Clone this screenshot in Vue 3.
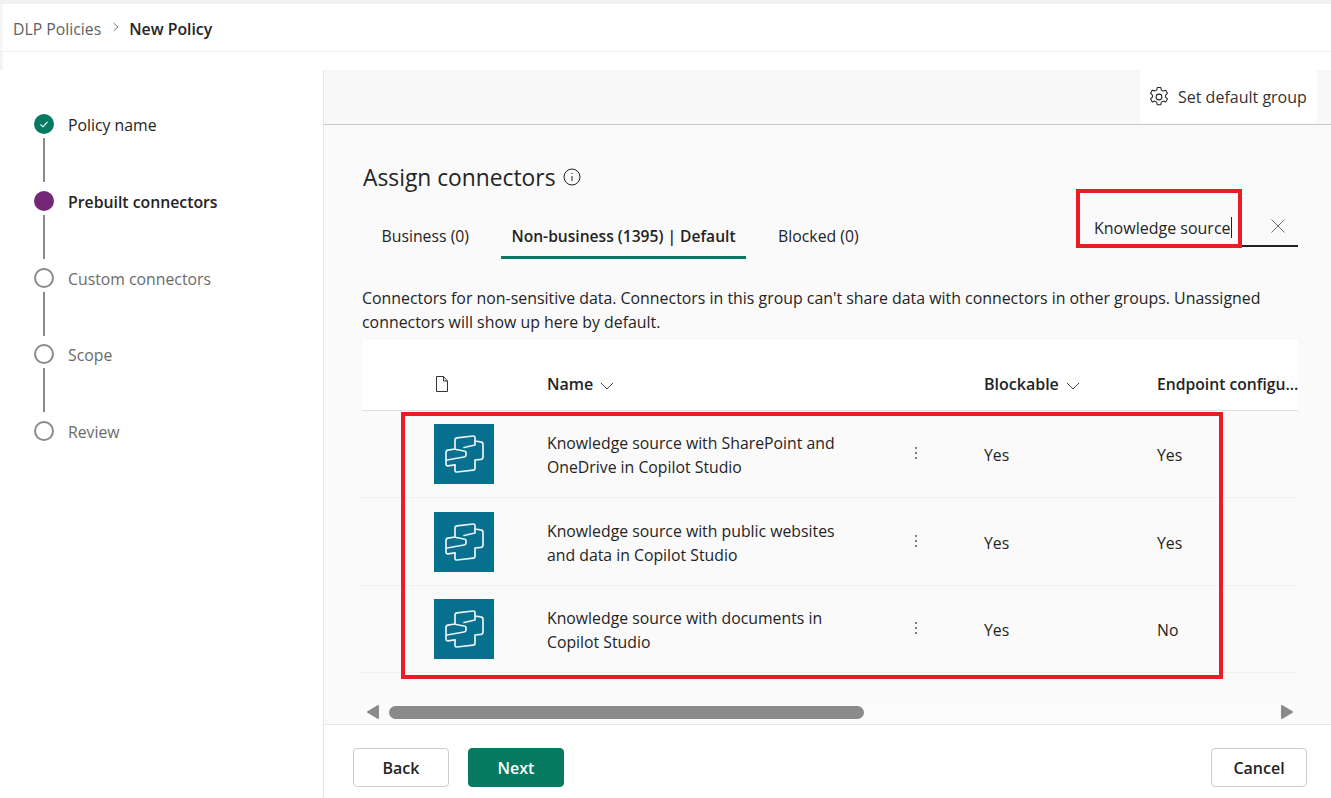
<script setup>
const steps = [
  { label: 'Policy name', state: 'done' },
  { label: 'Prebuilt connectors', state: 'current' },
  { label: 'Custom connectors', state: 'todo' },
  { label: 'Scope', state: 'todo' },
  { label: 'Review', state: 'todo' },
]

const rows = [
  { name: 'Knowledge source with SharePoint and OneDrive in Copilot Studio', blockable: 'Yes', endpoint: 'Yes' },
  { name: 'Knowledge source with public websites and data in Copilot Studio', blockable: 'Yes', endpoint: 'Yes' },
  { name: 'Knowledge source with documents in Copilot Studio', blockable: 'Yes', endpoint: 'No' },
]
</script>

<template>
  <div class="page">
    <div class="top-strip"></div>
    <div class="crumbs">
      <span class="crumb">DLP Policies</span>
      <svg class="crumb-sep" width="10" height="10" viewBox="0 0 10 10"><path d="M2.5 1l4.5 4-4.5 4" fill="none" stroke="#777" stroke-width="1" /></svg>
      <span class="crumb-now">New Policy</span>
    </div>
    <div class="band"></div>

    <div class="body">
      <aside class="side">
        <div v-for="(step, i) in steps" :key="step.label" class="step" :class="step.state">
          <div class="rail">
            <span class="dot">
              <svg v-if="step.state === 'done'" width="12" height="12" viewBox="0 0 12 12"><path d="M2.5 6.5l2.5 2.3 4.5-5" fill="none" stroke="#fff" stroke-width="1.1" /></svg>
            </span>
            <span v-if="i < steps.length - 1" class="line"></span>
          </div>
          <span class="step-label">{{ step.label }}</span>
        </div>
      </aside>

      <main class="main">
        <div class="toolbar">
          <button class="default-btn">
            <svg width="20" height="20" viewBox="1 1 18 18" fill="none" stroke="#242424" stroke-width=".95">
              <circle cx="10" cy="10" r="2.6" />
              <path d="M8.4 1.500h3.200l.5 2.300 1.700.9 2.200-.8 1.600 2.800-1.700 1.600v1.800l1.700 1.600-1.600 2.800-2.200-.8-1.700.9-.5 2.300H8.400l-.5-2.300-1.700-.9-2.200.8-1.600-2.800 1.700-1.600V8.300L2.400 6.700 4 3.900l2.200.8 1.700-.9z" stroke-linejoin="round" />
            </svg>
            <span>Set default group</span>
          </button>
        </div>

        <div class="content">
          <div class="title-row">
            <h1>Assign connectors</h1>
            <svg width="18" height="18" viewBox="0 0 18 18" fill="none" stroke="#242424">
              <circle cx="9" cy="9" r="8" />
              <path d="M9 8v5" />
              <circle cx="9" cy="5.4" r=".6" fill="#242424" stroke="none" />
            </svg>
          </div>

          <div class="tab-row">
            <div class="tabs">
              <span class="tab">Business (0)</span>
              <span class="tab active">Non-business (1395) | Default</span>
              <span class="tab">Blocked (0)</span>
            </div>
            <div class="search">
              <span class="search-text">Knowledge source</span>
              <span class="caret"></span>
              <svg class="search-x" width="16" height="16" viewBox="0 0 16 16"><path d="M1.5 1.5l13 13M14.500 1.500l-13 13" stroke="#6f6f6f" stroke-width="1" /></svg>
            </div>
            <div class="mark mark-search"></div>
          </div>

          <p class="hint">Connectors for non-sensitive data. Connectors in this group can't share data with connectors in other groups. Unassigned connectors will show up here by default.</p>

          <div class="table">
            <div class="grid head">
              <span></span>
              <svg width="16" height="18" viewBox="0 0 16 18" fill="none" stroke="#333"><path d="M2.500 1.500h7l4 4.500v10.500h-11zM9.500 1.500v4.500h4" /></svg>
              <span class="col-head">Name <svg width="14" height="8" viewBox="0 0 14 8"><path d="M1 1l6 6 6-6" fill="none" stroke="#444" /></svg></span>
              <span></span>
              <span class="col-head">Blockable <svg width="14" height="8" viewBox="0 0 14 8"><path d="M1 1l6 6 6-6" fill="none" stroke="#444" /></svg></span>
              <span class="col-head clip">Endpoint configu...</span>
            </div>

            <div v-for="row in rows" :key="row.name" class="grid row">
              <span></span>
              <div class="logo">
                <svg width="60" height="60" viewBox="0 0 60 60" fill="none" stroke="#e9f3f6" stroke-width="1.700" stroke-linejoin="round" stroke-linecap="round">
                  <path d="M21 25V16q0-2 2-2.200l16-1.800q2-.2 2 2V17l5.500.8q2.500.3 2.500 2.500V33q0 2-2 2.300l-6 .7v8q0 2-2 2.200l-16 1.800q-2 .2-2-2V41" />
                  <path d="M41 17v4l-11 2.500" />
                  <path d="M21 25l-7 1.200q-2 .3-2 2.500V40q0 2 2 1.800l7-1" />
                  <path d="M13 36l17-3q2-.3 2-2v-2q0-2-2-2l-8-1.500" />
                </svg>
              </div>
              <span class="row-name">{{ row.name }}</span>
              <svg class="more" width="4" height="14" viewBox="0 0 4 14" fill="#555"><circle cx="2" cy="2" r="1" /><circle cx="2" cy="7" r="1" /><circle cx="2" cy="12" r="1" /></svg>
              <span class="cell">{{ row.blockable }}</span>
              <span class="cell">{{ row.endpoint }}</span>
            </div>
            <div class="mark mark-table"></div>
          </div>

          <div class="scroller">
            <svg width="12" height="14" viewBox="0 0 12 14"><path d="M11 1v12L1 7z" fill="#8a8a8a" stroke="#8a8a8a" stroke-width="2" stroke-linejoin="round" /></svg>
            <div class="track"><div class="thumb"></div></div>
            <svg width="12" height="14" viewBox="0 0 12 14"><path d="M1 1v12l10-6z" fill="#8a8a8a" stroke="#8a8a8a" stroke-width="2" stroke-linejoin="round" /></svg>
          </div>
        </div>

        <footer class="foot">
          <button class="btn">Back</button>
          <button class="btn primary">Next</button>
          <button class="btn cancel">Cancel</button>
        </footer>
      </main>
    </div>
  </div>
</template>

<style scoped>
.page {
  width: 1331px;
  height: 798px;
  display: flex;
  flex-direction: column;
  overflow: hidden;
  background: #fff;
  color: #242424;
  font-family: "Open Sans", "Noto Sans", sans-serif;
  font-size: 15.800px;
}
.top-strip {
  height: 4px;
  background: #f0f0f0;
  flex: none;
}
.crumbs {
  height: 48px;
  flex: none;
  box-sizing: border-box;
  padding: 2px 0 0 13px;
  display: flex;
  align-items: center;
  border-bottom: 1px solid #f2f2f2;
  background: linear-gradient(90deg, #f2f2f2 0, #fff 4px);
}
.crumb {
  color: #616161;
}
.crumb-sep {
  margin: 0 8px 3px 10px;
}
.crumb-now {
  font-weight: 600;
}
.band {
  height: 18px;
  flex: none;
  background: linear-gradient(90deg, #eee 0, #fff 4px);
}
.body {
  flex: 1;
  display: flex;
  min-height: 0;
}
.side {
  width: 324px;
  flex: none;
  box-sizing: border-box;
  padding: 44px 0 0 34px;
  border-right: 1px solid #e6e6e6;
}
.step {
  display: flex;
  height: 76.750px;
  gap: 14px;
}
.rail {
  width: 20px;
  display: flex;
  flex-direction: column;
  align-items: center;
  gap: 4px;
}
.dot {
  width: 20px;
  height: 20px;
  border-radius: 50%;
  box-sizing: border-box;
  flex: none;
  display: flex;
  align-items: center;
  justify-content: center;
}
.done .dot {
  background: #057a60;
}
.current .dot {
  background: #742774;
}
.todo .dot {
  border: 2px solid #8a8a8a;
}
.line {
  width: 2px;
  height: 44px;
  background: #8a8a8a;
}
.step-label {
  line-height: 22px;
}
.current .step-label {
  font-weight: 600;
}
.todo .step-label {
  color: #6b6b6b;
}
.main {
  flex: 1;
  min-width: 0;
  display: flex;
  flex-direction: column;
}
.toolbar {
  height: 55px;
  flex: none;
  box-sizing: border-box;
  background: #f8f8f8;
  border-bottom: 1px solid #c8c8c8;
  display: flex;
  justify-content: flex-end;
  padding-right: 14px;
}
.default-btn {
  height: 53px;
  width: 177px;
  border: 0;
  border-radius: 4px;
  background: #fff;
  font: inherit;
  font-size: 16px;
  color: #333;
  display: flex;
  align-items: center;
  gap: 9px;
  padding: 0 0 0 9px;
}
.content {
  flex: 1;
  min-height: 0;
  box-sizing: border-box;
  background: #fafafa;
  padding: 34px 33px 0 38px;
  display: flex;
  flex-direction: column;
}
.title-row {
  display: flex;
  align-items: center;
  gap: 7px;
  height: 36px;
  padding-left: 1px;
}
h1 {
  margin: 0;
  font-size: 22.800px;
  font-weight: 400;
}
.tab-row {
  position: relative;
  display: flex;
  justify-content: space-between;
  align-items: flex-start;
  height: 48px;
  margin-top: 18px;
}
.tabs {
  display: flex;
  gap: 21.500px;
  padding-left: 9px;
}
.tab {
  height: 46px;
  padding: 0 10.500px;
  box-sizing: border-box;
  line-height: 46px;
}
.tab.active {
  font-size: 15.600px;
  font-weight: 600;
  border-bottom: 3px solid #057a60;
}
.search {
  position: relative;
  width: 221px;
  height: 35px;
  box-sizing: border-box;
  border-bottom: 2px solid #222;
  padding-left: 17px;
  line-height: 32px;
  margin-top: -1px;
  display: flex;
  font-size: 16px;
}
.caret {
  width: 1px;
  height: 21px;
  background: #222;
  margin-top: 5px;
}
.search-x {
  margin: 6px 0 0 auto;
  position: relative;
  right: 12px;
}
.mark {
  position: absolute;
  border: 4px solid #ed1c24;
  box-sizing: border-box;
  pointer-events: none;
}
.mark-search {
  left: 714px;
  top: -24px;
  width: 166px;
  height: 59px;
}
.hint {
  margin: 0;
  line-height: 24px;
  font-size: 15.900px;
  padding-top: 25px;
}
.table {
  position: relative;
  margin-top: 6px;
  flex: none;
}
.grid {
  display: grid;
  grid-template-columns: 72px 113px 356px 81px 173px 1fr;
  align-items: center;
}
.head {
  height: 71px;
  padding-top: 18px;
  background: #fff;
  border-bottom: 1px solid #e1e1e1;
  box-sizing: border-box;
  font-weight: 600;
  font-size: 16px;
}
.col-head svg {
  margin-left: 3px;
}
.clip {
  white-space: nowrap;
  font-size: 15.700px;
}
.row {
  height: 87.400px;
  box-sizing: border-box;
  border-bottom: 1px solid #f0f0f0;
}
.logo {
  width: 60px;
  height: 60px;
  background: #07708f;
}
.row-name {
  line-height: 24px;
  width: 310px;
  padding-top: 2px;
}
.cell {
  padding-top: 2px;
}
.more {
  margin: 0 0 2px 11px;
}
.mark-table {
  left: 39px;
  top: 72px;
  width: 822px;
  height: 267px;
}
.scroller {
  margin-top: 28.300px;
  height: 22px;
  display: flex;
  align-items: center;
  padding: 0 5px;
  background: #fbfbfb;
}
.track {
  flex: 1;
  padding-left: 10px;
}
.thumb {
  width: 475px;
  height: 13px;
  border-radius: 7px;
  background: #8a8a8a;
}
.foot {
  height: 74px;
  flex: none;
  box-sizing: border-box;
  border-top: 1px solid #e6e6e6;
  display: flex;
  align-items: flex-start;
  padding: 23px 24px 0 29px;
  gap: 19px;
  background: #fff;
}
.btn {
  width: 96px;
  height: 39px;
  border: 1px solid #ccc;
  border-radius: 4px;
  background: #fff;
  font: inherit;
  font-size: 16px;
  font-weight: 600;
  color: #242424;
  padding: 0;
}
.primary {
  background: #057a60;
  border-color: #057a60;
  color: #fff;
}
.cancel {
  margin-left: auto;
}
</style>

<style>
html, body {
  margin: 0;
}
</style>
